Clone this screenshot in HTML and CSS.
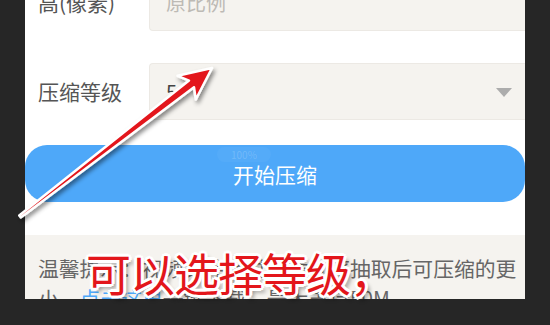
FILE: index.html
```html
<!DOCTYPE html>
<html>
<head>
<meta charset="utf-8">
<link rel="stylesheet" href="styles.css">
</head>
<body>
<div class="screen">
  <div class="row row-first">
    <div class="label">高(像素)</div>
    <div class="field"><span class="placeholder">原比例</span></div>
  </div>
  <div class="row row-second">
    <div class="label">压缩等级</div>
    <div class="field select"><span class="value">5</span><span class="caret"></span></div>
  </div>
  <div class="btn">
    <span class="wm">100%</span>
    <span class="btn-text">开始压缩</span>
  </div>
  <div class="tip">
    <p class="tip-line">温馨提示：视频文件经过画质帧率抽取后可压缩的更</p>
    <p class="tip-line">小，<span class="link">点击这里</span>一键下载，最大支持50M</p>
  </div>
</div>
<div class="caption">可以选择等级，</div>
<svg class="arrow" width="550" height="325" viewBox="0 0 550 325">
  <defs>
    <filter id="sh" x="-10%" y="-10%" width="130%" height="130%">
      <feDropShadow dx="2" dy="3" stdDeviation="2" flood-color="#000" flood-opacity="0.45"/>
    </filter>
  </defs>
  <g filter="url(#sh)">
    <path d="M212 68 L195.8 99.5 L194 87.2 L20.8 217.5 L19.2 215.5 L189 80.6 L177.5 75.8 Z" fill="#e3161b" stroke="#fff" stroke-width="2.5" stroke-linejoin="round"/>
  </g>
</svg>
</body>
</html>
```

FILE: styles.css
```css
html, body {
  margin: 0;
  padding: 0;
}
body {
  width: 550px;
  height: 325px;
  overflow: hidden;
  background: #262626;
  position: relative;
  font-family: "Noto Sans CJK SC", "Noto Sans", sans-serif;
}
.screen {
  width: 500px;
  height: 299px;
  margin-left: 25px;
  background: #ffffff;
  overflow: hidden;
  display: flex;
  flex-direction: column;
}
.row {
  display: flex;
  align-items: center;
  flex-shrink: 0;
}
.row-first {
  margin-top: -26px;
}
.row-second {
  margin-top: 32px;
}
.label {
  width: 111px;
  padding-left: 13px;
  font-size: 21px;
  color: #555;
  line-height: 57px;
}
.field {
  flex: 1;
  height: 55px;
  background: #f5f3ef;
  border: 1px solid #ece9e4;
  border-right: none;
  border-radius: 4px 0 0 4px;
  display: flex;
  align-items: center;
  padding-left: 16px;
  font-size: 20px;
}
.placeholder {
  color: #bdbab5;
}
.value {
  color: #444;
  flex: 1;
}
.caret {
  width: 0;
  height: 0;
  border-left: 8px solid transparent;
  border-right: 8px solid transparent;
  border-top: 9px solid #acacac;
  margin-right: 13px;
  margin-top: 2px;
}
.btn {
  margin-top: 25px;
  height: 57px;
  flex-shrink: 0;
  background: #4ea8f9;
  border-radius: 22px;
  display: flex;
  align-items: center;
  justify-content: center;
  position: relative;
}
.btn-text {
  color: #ffffff;
  font-size: 21px;
}
.wm {
  position: absolute;
  left: 192px;
  top: 2px;
  font-size: 10px;
  color: rgba(255, 255, 255, 0.18);
  padding: 0 14px;
  border-radius: 10px;
  background: rgba(255, 255, 255, 0.04);
}
.tip {
  margin-top: 33px;
  flex: 1;
  background: #f5f3ef;
  padding: 18px 8px 0 13px;
}
.tip-line {
  margin: 0;
  font-size: 20.8px;
  line-height: 30px;
  color: #666;
  white-space: nowrap;
}
.link {
  color: #4ea8f9;
}
.caption {
  position: absolute;
  left: 86px;
  top: 247px;
  font-size: 45px;
  font-weight: 400;
  line-height: 52px;
  letter-spacing: -1px;
  color: #e3161b;
  white-space: nowrap;
  text-shadow:
    3px 0 0 #fff, -3px 0 0 #fff, 0 3px 0 #fff, 0 -3px 0 #fff,
    2px 2px 0 #fff, -2px -2px 0 #fff, 2px -2px 0 #fff, -2px 2px 0 #fff,
    4px 4px 4px rgba(0, 0, 0, 0.45);
}
.arrow {
  position: absolute;
  left: 0;
  top: 0;
}
```
